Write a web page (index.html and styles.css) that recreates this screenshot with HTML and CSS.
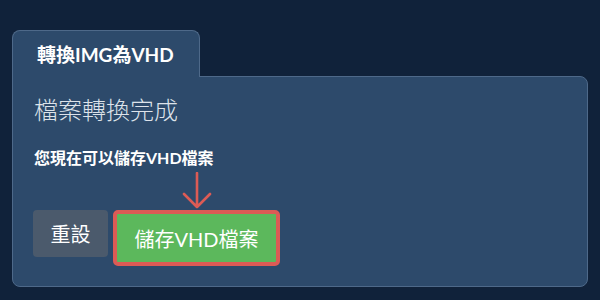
FILE: index.html
```html
<!DOCTYPE html>
<html lang="zh-Hant">
<head>
    <meta charset="UTF-8">
    <title>轉換IMG為VHD</title>
    <link rel="stylesheet" href="styles.css">
</head>
<body>
    <div id="wrap">
        <div class="tabs">
            <div class="tab active">轉換IMG為VHD</div>
        </div>
        <div class="panel">
            <h2 class="done-title">檔案轉換完成</h2>
            <p class="note">您現在可以儲存VHD檔案</p>
            <div class="arrow-row">
                <svg class="arrow" width="30" height="38" viewBox="0 0 30 38">
                    <path d="M15 1 V35 M2 22 L15 35 L28 22" fill="none" stroke="#dc5b55" stroke-width="2.6" stroke-linecap="round" stroke-linejoin="round"/>
                </svg>
            </div>
            <div class="actions">
                <button class="btn reset">重設</button>
                <button class="btn save">儲存VHD檔案</button>
            </div>
        </div>
    </div>
</body>
</html>
```

FILE: styles.css
```css
body {
    margin: 0;
    padding: 0;
    background-color: #10223a;
    font-family: "Lato", "Noto Sans CJK TC", sans-serif;
    color: #ffffff;
}

#wrap {
    padding: 30px 12px 0 12px;
}

.tabs {
    display: flex;
}

.tab {
    position: relative;
    z-index: 1;
    width: 188px;
    height: 47px;
    box-sizing: border-box;
    margin-bottom: -1px;
    padding-left: 24px;
    line-height: 47px;
    font-size: 19px;
    font-weight: bold;
    background-color: #2d4a6b;
    border: 1px solid #4e6989;
    border-bottom: none;
    border-radius: 8px 8px 0 0;
}

.panel {
    height: 211px;
    box-sizing: border-box;
    padding: 16px 21px;
    background-color: #2d4a6b;
    border: 1px solid #4e6989;
    border-radius: 0 8px 8px 8px;
}

.done-title {
    margin: 0;
    font-size: 24px;
    font-weight: 300;
    color: #dde3ea;
    line-height: 34px;
}

.note {
    margin: 20px 0 0 0;
    font-size: 16px;
    font-weight: bold;
    line-height: 22px;
}

.arrow-row {
    height: 38px;
    padding-left: 148px;
    margin-top: 3px;
}

.actions {
    display: flex;
    align-items: flex-start;
    gap: 5px;
    margin-left: -1px;
}

.btn {
    font-family: "Lato", "Noto Sans CJK TC", sans-serif;
    font-size: 20px;
    color: #ffffff;
    border: none;
    border-radius: 4px;
    cursor: pointer;
}

.reset {
    width: 75px;
    height: 47px;
    background-color: #4b5a6c;
}

.save {
    width: 167px;
    height: 56px;
    background-color: #5cb85c;
    border: 4px solid #dc5b55;
    border-radius: 5px;
}
```
